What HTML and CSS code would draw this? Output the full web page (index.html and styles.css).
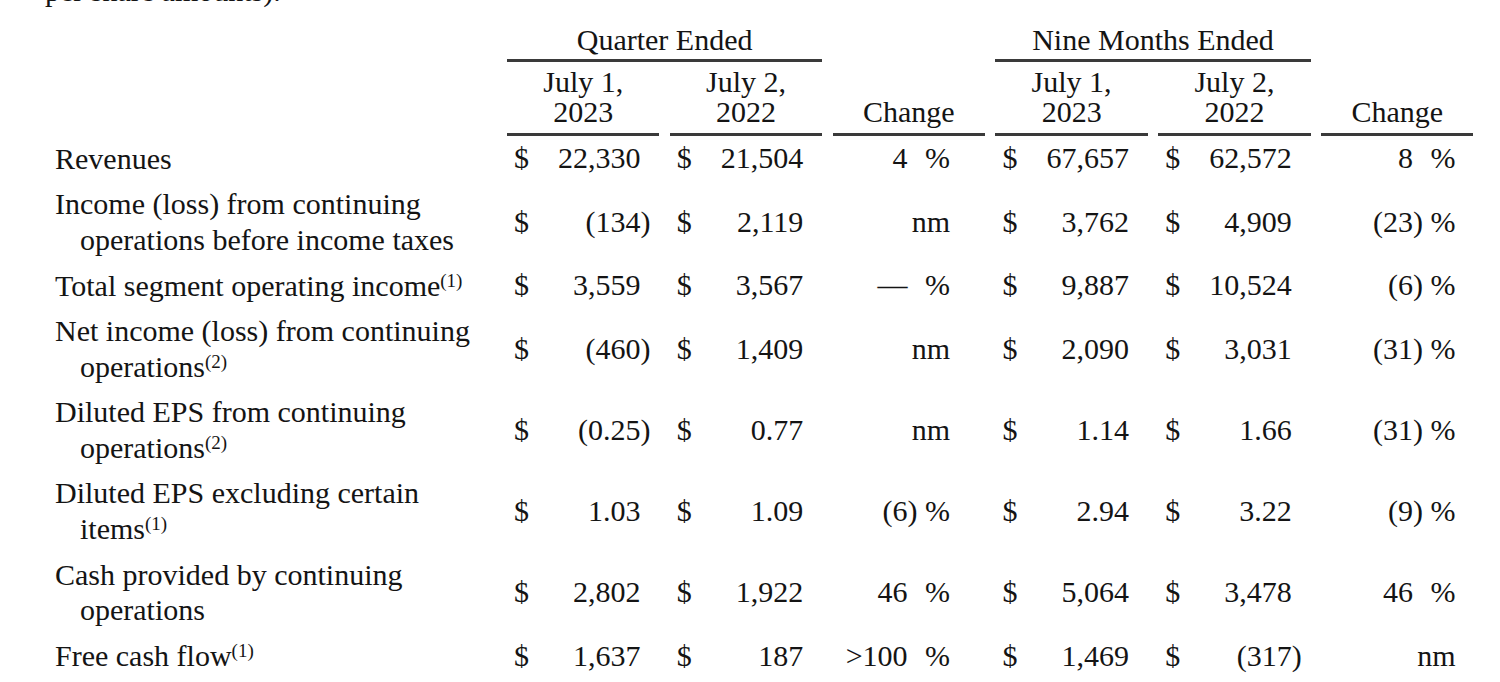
FILE: index.html
```html
<!DOCTYPE html>
<html lang="en">
<head>
<meta charset="utf-8">
<title>Selected financial results</title>
<link rel="stylesheet" href="styles.css">
</head>
<body>
<p class="intro">per share amounts).</p>
<div class="table">
  <div class="row">
    <div></div>
    <div class="grp">Quarter Ended</div>
    <div></div>
    <div class="grp">Nine Months Ended</div>
    <div></div>
  </div>
  <div class="row">
    <div></div>
    <div class="hd">July 1,<br>2023</div>
    <div class="hd">July 2,<br>2022</div>
    <div class="hd">Change</div>
    <div class="hd">July 1,<br>2023</div>
    <div class="hd">July 2,<br>2022</div>
    <div class="hd">Change</div>
  </div>

  <div class="row">
    <div class="lab">Revenues</div>
    <div class="n"><span>$</span><span class="v">22,330</span><span class="p"></span></div>
    <div class="n"><span>$</span><span class="v">21,504</span><span class="p"></span></div>
    <div class="c"><span class="v">4</span><span class="p"></span><span class="pct">%</span></div>
    <div class="n"><span>$</span><span class="v">67,657</span><span class="p"></span></div>
    <div class="n"><span>$</span><span class="v">62,572</span><span class="p"></span></div>
    <div class="c m"><span class="v">8</span><span class="p"></span><span class="pct">%</span></div>
  </div>

  <div class="row">
    <div class="lab">Income (loss) from continuing<br>operations before income taxes</div>
    <div class="n"><span>$</span><span class="v">(134</span><span class="p">)</span></div>
    <div class="n"><span>$</span><span class="v">2,119</span><span class="p"></span></div>
    <div class="c"><span class="v">nm</span></div>
    <div class="n"><span>$</span><span class="v">3,762</span><span class="p"></span></div>
    <div class="n"><span>$</span><span class="v">4,909</span><span class="p"></span></div>
    <div class="c m"><span class="v">(23</span><span class="p">)</span><span class="pct">%</span></div>
  </div>

  <div class="row">
    <div class="lab">Total segment operating income<span class="sup">(1)</span></div>
    <div class="n"><span>$</span><span class="v">3,559</span><span class="p"></span></div>
    <div class="n"><span>$</span><span class="v">3,567</span><span class="p"></span></div>
    <div class="c"><span class="v">—</span><span class="p"></span><span class="pct">%</span></div>
    <div class="n"><span>$</span><span class="v">9,887</span><span class="p"></span></div>
    <div class="n"><span>$</span><span class="v">10,524</span><span class="p"></span></div>
    <div class="c m"><span class="v">(6</span><span class="p">)</span><span class="pct">%</span></div>
  </div>

  <div class="row">
    <div class="lab">Net income (loss) from continuing<br>operations<span class="sup">(2)</span></div>
    <div class="n"><span>$</span><span class="v">(460</span><span class="p">)</span></div>
    <div class="n"><span>$</span><span class="v">1,409</span><span class="p"></span></div>
    <div class="c"><span class="v">nm</span></div>
    <div class="n"><span>$</span><span class="v">2,090</span><span class="p"></span></div>
    <div class="n"><span>$</span><span class="v">3,031</span><span class="p"></span></div>
    <div class="c m"><span class="v">(31</span><span class="p">)</span><span class="pct">%</span></div>
  </div>

  <div class="row">
    <div class="lab">Diluted EPS from continuing<br>operations<span class="sup">(2)</span></div>
    <div class="n"><span>$</span><span class="v">(0.25</span><span class="p">)</span></div>
    <div class="n"><span>$</span><span class="v">0.77</span><span class="p"></span></div>
    <div class="c"><span class="v">nm</span></div>
    <div class="n"><span>$</span><span class="v">1.14</span><span class="p"></span></div>
    <div class="n"><span>$</span><span class="v">1.66</span><span class="p"></span></div>
    <div class="c m"><span class="v">(31</span><span class="p">)</span><span class="pct">%</span></div>
  </div>

  <div class="row">
    <div class="lab">Diluted EPS excluding certain<br>items<span class="sup">(1)</span></div>
    <div class="n"><span>$</span><span class="v">1.03</span><span class="p"></span></div>
    <div class="n"><span>$</span><span class="v">1.09</span><span class="p"></span></div>
    <div class="c"><span class="v">(6</span><span class="p">)</span><span class="pct">%</span></div>
    <div class="n"><span>$</span><span class="v">2.94</span><span class="p"></span></div>
    <div class="n"><span>$</span><span class="v">3.22</span><span class="p"></span></div>
    <div class="c m"><span class="v">(9</span><span class="p">)</span><span class="pct">%</span></div>
  </div>

  <div class="row">
    <div class="lab">Cash provided by continuing<br>operations</div>
    <div class="n"><span>$</span><span class="v">2,802</span><span class="p"></span></div>
    <div class="n"><span>$</span><span class="v">1,922</span><span class="p"></span></div>
    <div class="c"><span class="v">46</span><span class="p"></span><span class="pct">%</span></div>
    <div class="n"><span>$</span><span class="v">5,064</span><span class="p"></span></div>
    <div class="n"><span>$</span><span class="v">3,478</span><span class="p"></span></div>
    <div class="c m"><span class="v">46</span><span class="p"></span><span class="pct">%</span></div>
  </div>

  <div class="row">
    <div class="lab">Free cash flow<span class="sup">(1)</span></div>
    <div class="n"><span>$</span><span class="v">1,637</span><span class="p"></span></div>
    <div class="n"><span>$</span><span class="v">187</span><span class="p"></span></div>
    <div class="c"><span class="v">&gt;100</span><span class="p"></span><span class="pct">%</span></div>
    <div class="n"><span>$</span><span class="v">1,469</span><span class="p"></span></div>
    <div class="n"><span>$</span><span class="v">(317</span><span class="p">)</span></div>
    <div class="c m"><span class="v">nm</span></div>
  </div>
</div>
</body>
</html>
```

FILE: styles.css
```css
html, body {
  margin: 0;
  padding: 0;
  background: #ffffff;
}

body {
  color: #141414;
  font-family: "Liberation Serif", "Times New Roman", serif;
  font-size: 30px;
  overflow: hidden;
}

.intro {
  margin: -27px 0 0 0;
  padding-left: 45px;
  line-height: 35.4px;
  white-space: nowrap;
}

.table {
  display: grid;
  grid-template-columns: 441.7px repeat(6, 152.5px);
  column-gap: 10.3px;
  padding-left: 55px;
  margin-top: 2px;
}

.row {
  display: contents;
}

.grp {
  grid-column: span 2;
  text-align: center;
  line-height: 30px;
  padding: 14.5px 0 4.5px;
  border-bottom: 3px solid #3a3a3a;
  white-space: nowrap;
}

.hd {
  display: flex;
  flex-direction: column;
  justify-content: flex-end;
  text-align: center;
  line-height: 30px;
  padding: 4.5px 0 5.6px;
  border-bottom: 3px solid #3a3a3a;
}

.lab {
  line-height: 35.6px;
  padding: 5.3px 0 4.7px 25px;
  text-indent: -25px;
  white-space: nowrap;
}

.sup {
  font-size: 19px;
  line-height: 0;
  vertical-align: 9px;
}

.n,
.c {
  display: flex;
  align-items: center;
  line-height: 35.6px;
  white-space: nowrap;
}

.n {
  padding: 0 9px 0 7px;
}

.n .v {
  flex: 1;
  text-align: right;
}

.p {
  display: inline-block;
  width: 10px;
}

.c {
  justify-content: flex-end;
  padding-right: 35px;
}

.c.m {
  padding-right: 18px;
}

.pct {
  margin-left: 7.5px;
}
```
